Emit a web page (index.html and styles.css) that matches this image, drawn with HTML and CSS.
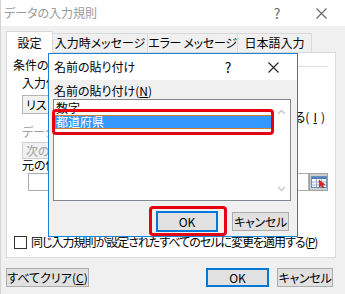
FILE: index.html
```html
<!DOCTYPE html>
<html lang="ja">
<head>
  <meta charset="UTF-8">
  <title>データの入力規則</title>
  <link rel="stylesheet" href="styles.css">
</head>
<body>

<div class="window">
  <div class="titlebar">
    <span class="title">データの入力規則</span>
    <span class="tb-help">?</span>
    <span class="tb-close">
      <svg width="11" height="11" viewBox="0 0 11 11"><path d="M0.5 0.5L10.5 10.5M10.5 0.5L0.5 10.5" stroke="#666" stroke-width="1.1"/></svg>
    </span>
  </div>

  <div class="body">
    <div class="tabs">
      <div class="tab active">設定</div>
      <div class="tab t2">入力時メッセージ</div>
      <div class="tab t3">エラー メッセージ</div>
      <div class="tab t4">日本語入力</div>
    </div>

    <div class="panel">
      <div class="group-head"><span>条件の設定</span><span class="rule"></span></div>

      <div class="cond">
        <div class="cond-left">
          <div class="lbl">入力値の種類(<u>A</u>):</div>
          <div class="select">リスト</div>
          <div class="lbl dim gap">データ(<u>D</u>):</div>
          <div class="select disabled">次の値の間</div>
        </div>
        <div class="cond-right">
          <div class="check"><span class="box"></span>空白を無視する(<u>B</u>)</div>
          <div class="check"><span class="box"></span>ドロップダウン リストから選択する(<u>I</u>)</div>
        </div>
      </div>

      <div class="lbl src-lbl">元の値(<u>S</u>):</div>
      <div class="source">
        <div class="source-input"></div>
        <div class="ref-btn">
          <svg width="16" height="12" viewBox="0 0 16 12">
            <rect x="0.5" y="0.5" width="15" height="11" fill="#fff" stroke="#6b8fb8"/>
            <rect x="1" y="1" width="14" height="2" fill="#4f7fbf"/>
            <path d="M1 6H15M1 9H15M5.5 3V11M10.5 3V11" stroke="#8fb0d8" stroke-width="1"/>
            <path d="M8 4L14 8.5L11.5 9L13 11.5L11.8 12L10.3 9.6L8.5 11Z" fill="#e0262b" stroke="#8a1010" stroke-width="0.5"/>
          </svg>
        </div>
      </div>

      <div class="check apply"><span class="box"></span><span class="apply-text">同じ入力規則が設定されたすべてのセルに変更を適用する(<u>P</u>)</span></div>
    </div>

    <div class="footer">
      <button class="btn clear">すべてクリア(<u>C</u>)</button>
      <span class="spacer"></span>
      <button class="btn ok default">OK</button>
      <button class="btn cancel">キャンセル</button>
    </div>
  </div>

  <div class="paste-dialog">
    <div class="dlg-title">
      <span class="dlg-name">名前の貼り付け</span>
      <span class="dlg-help">?</span>
      <span class="dlg-close">
        <svg width="11" height="11" viewBox="0 0 11 11"><path d="M0.5 0.5L10.5 10.5M10.5 0.5L0.5 10.5" stroke="#222" stroke-width="1.1"/></svg>
      </span>
    </div>
    <div class="dlg-body">
      <div class="dlg-lbl">名前の貼り付け(<u>N</u>)</div>
      <div class="listbox">
        <div class="items">
          <div class="item">数字</div>
          <div class="item selected">都道府県</div>
        </div>
        <div class="scroll">
          <svg width="9" height="6" viewBox="0 0 9 6"><path d="M1 5L4.5 1.5L8 5" fill="none" stroke="#c8c8c8" stroke-width="1.5"/></svg>
          <svg width="9" height="6" viewBox="0 0 9 6"><path d="M1 1L4.5 4.5L8 1" fill="none" stroke="#c8c8c8" stroke-width="1.5"/></svg>
        </div>
      </div>
      <div class="dlg-buttons">
        <button class="btn dlg-ok default">OK</button>
        <button class="btn dlg-cancel">キャンセル</button>
      </div>
    </div>

    <div class="mark mark-item"></div>
    <div class="mark mark-ok"></div>
  </div>
</div>

</body>
</html>
```

FILE: styles.css
```css
body {
  margin: 0;
  font-family: "Noto Sans CJK JP", "Noto Sans", sans-serif;
  font-size: 12px;
  font-feature-settings: "palt";
  color: #000;
}

u { text-decoration-thickness: 1px; text-underline-offset: 1px; }

.window {
  position: relative;
  width: 345px;
  height: 294px;
  background: #f0f0f0;
  border-left: 1px solid #d4d4d4;
  box-sizing: border-box;
  overflow: hidden;
  white-space: nowrap;
}

.titlebar {
  height: 26px;
  background: #fff;
  display: flex;
  align-items: center;
  padding-left: 3px;
}

.title { color: #9a9a9a; line-height: 14px; flex: 1; }
.tb-help { color: #666; font-size: 14px; width: 20px; text-align: center; margin-right: 29px; }
.tb-close { width: 11px; height: 11px; margin-right: 18px; display: flex; }

.body { padding: 5px 0 0 5px; }

.tabs {
  display: flex;
  align-items: flex-end;
  height: 21px;
}

.tab {
  height: 19px;
  box-sizing: border-box;
  border: 1px solid #d9d9d9;
  border-bottom: none;
  background: #f0f0f0;
  line-height: 17px;
  text-align: center;
}

.tab.active {
  width: 47px;
  height: 22px;
  margin-bottom: -1px;
  background: #fff;
  line-height: 22px;
  position: relative;
  z-index: 1;
}

.t2 { width: 95px; border-left: none; }
.t3 { width: 90px; border-left: none; letter-spacing: -0.3px; }
.t4 { width: 74px; border-left: none; }

.panel {
  width: 330px;
  height: 206px;
  box-sizing: border-box;
  background: #fff;
  border: 1px solid #d9d9d9;
  display: flex;
  flex-direction: column;
  padding: 5px 7px 8px 6px;
}

.group-head {
  display: flex;
  align-items: center;
  line-height: 14px;
}

.group-head .rule {
  flex: 1;
  height: 1px;
  background: #dcdcdc;
  margin: 2px 0 0 6px;
}

.lbl { line-height: 14px; padding-left: 9px; }
.lbl.dim { color: #a0a0a0; }
.lbl.gap { margin-top: 11px; }

.cond { display: flex; margin-top: 4px; }
.cond-left { flex: 1; min-width: 0; }

.select {
  margin: 5px 0 0 9px;
  width: 125px;
  height: 19px;
  box-sizing: border-box;
  border: 1px solid #b4b4b4;
  background: #f2f2f2;
  line-height: 17px;
  padding-left: 3px;
}

.select.disabled {
  margin-top: 3px;
  height: 17px;
  line-height: 15px;
  background: #f0f0f0;
  border-color: #d0d0d0;
  color: #a0a0a0;
}

.cond-right {
  flex: none;
  margin-top: 20px;
  padding-right: 3px;
}

.check {
  display: flex;
  align-items: center;
  line-height: 14px;
  gap: 4px;
}

.box {
  flex: none;
  width: 13px;
  height: 13px;
  box-sizing: border-box;
  border: 1px solid #333;
  background: #fff;
}

.src-lbl { line-height: 12px; }

.source {
  display: flex;
  margin: 2px 0 0 15px;
}

.source-input {
  width: 289px;
  height: 18px;
  box-sizing: border-box;
  border: 1px solid #acacac;
  background: #fff;
}

.ref-btn {
  width: 19px;
  height: 18px;
  box-sizing: border-box;
  border: 1px solid #a0a0a0;
  background: #cfcfcf;
  display: flex;
  align-items: center;
  justify-content: center;
}

.apply {
  margin-top: auto;
  padding-left: 1px;
}

.apply-text { letter-spacing: -1px; }

.footer {
  display: flex;
  margin-top: 10px;
  padding-right: 12px;
}

.spacer { flex: 1; }

.btn {
  font-family: inherit;
  font-size: 12px;
  font-weight: 400;
  font-feature-settings: "palt";
  white-space: nowrap;
  height: 19px;
  box-sizing: border-box;
  padding: 0;
  border: 1px solid #adadad;
  background: #e1e1e1;
  color: #000;
  line-height: 15px;
}

.btn.default { border: 2px solid #0078d7; }

.clear { width: 83px; }
.ok { width: 63px; margin-right: 8px; }
.cancel { width: 56px; letter-spacing: -0.3px; }

/* 名前の貼り付け */
.paste-dialog {
  position: absolute;
  left: 47px;
  top: 53px;
  width: 250px;
  height: 184px;
  box-sizing: border-box;
  border: 1px solid #1883d7;
  background: #f0f0f0;
  display: flex;
  flex-direction: column;
}

.dlg-title {
  height: 26px;
  background: #fff;
  display: flex;
  align-items: center;
  padding-left: 5px;
}

.dlg-name { flex: 1; line-height: 14px; }
.dlg-help { font-size: 14px; width: 20px; text-align: center; margin-right: 30px; }
.dlg-close { width: 11px; height: 11px; display: flex; margin-right: 18px; }

.dlg-body { padding: 4px 6px 4px 4px; }

.dlg-lbl { line-height: 14px; padding-left: 1px; }

.listbox {
  margin-top: 1px;
  width: 238px;
  height: 102px;
  box-sizing: border-box;
  border: 1px solid #828790;
  background: #fff;
  display: flex;
}

.items { flex: 1; padding-top: 1px; }

.item {
  height: 14px;
  line-height: 14px;
  padding-left: 2px;
}

.item.selected {
  background: #3399ff;
  color: #fff;
  outline: 1px dotted #d9843a;
  outline-offset: -1px;
}

.scroll {
  width: 17px;
  display: flex;
  flex-direction: column;
  justify-content: space-between;
  align-items: center;
  padding: 9px 0 8px;
}

.dlg-buttons {
  display: flex;
  justify-content: flex-end;
  align-items: center;
  gap: 14px;
  margin-top: 10px;
  padding-right: 2px;
}

.dlg-ok { width: 62px; height: 21px; }
.dlg-cancel { width: 57px; height: 19px; letter-spacing: -0.3px; }

.mark {
  position: absolute;
  border: 3px solid #e60012;
  border-radius: 4px;
  box-sizing: border-box;
}

.mark-item { left: 3px; top: 55px; width: 222px; height: 26px; }
.mark-ok { left: 100px; top: 152px; width: 78px; height: 30px; }
```
